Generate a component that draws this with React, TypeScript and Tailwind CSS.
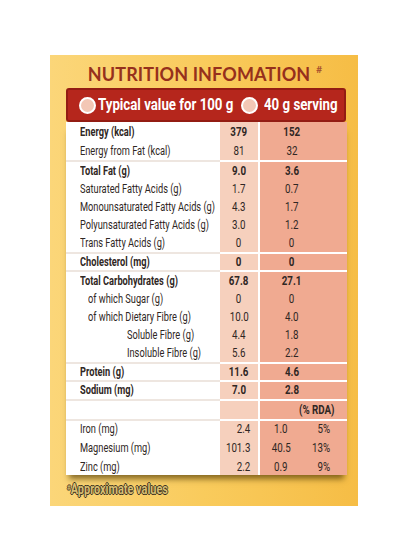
import type { ReactNode } from 'react'

type Row = {
  label: string
  a: string
  b: string
  bold?: boolean
  indent?: 'sub' | 'deep'
  h: number
  line?: boolean
}

const rows: Row[] = [
  { label: 'Energy (kcal)', a: '379', b: '152', bold: true, h: 20 },
  { label: 'Energy from Fat (kcal)', a: '81', b: '32', h: 18 },
  { label: 'Total Fat (g)', a: '9.0', b: '3.6', bold: true, h: 18, line: true },
  { label: 'Saturated Fatty Acids (g)', a: '1.7', b: '0.7', h: 18 },
  { label: 'Monounsaturated Fatty Acids (g)', a: '4.3', b: '1.7', h: 18 },
  { label: 'Polyunsaturated Fatty Acids (g)', a: '3.0', b: '1.2', h: 18 },
  { label: 'Trans Fatty Acids (g)', a: '0', b: '0', h: 18 },
  { label: 'Cholesterol (mg)', a: '0', b: '0', bold: true, h: 16, line: true },
  { label: 'Total Carbohydrates (g)', a: '67.8', b: '27.1', bold: true, h: 18, line: true },
  { label: 'of which Sugar (g)', a: '0', b: '0', indent: 'sub', h: 18 },
  { label: 'of which Dietary Fibre (g)', a: '10.0', b: '4.0', indent: 'sub', h: 18 },
  { label: 'Soluble Fibre (g)', a: '4.4', b: '1.8', indent: 'deep', h: 18 },
  { label: 'Insoluble Fibre (g)', a: '5.6', b: '2.2', indent: 'deep', h: 18 },
  { label: 'Protein (g)', a: '11.6', b: '4.6', bold: true, h: 16, line: true },
  { label: 'Sodium (mg)', a: '7.0', b: '2.8', bold: true, h: 17, line: true },
]

const minerals = [
  { label: 'Iron (mg)', a: '2.4', b: '1.0', rda: '5%', h: 16 },
  { label: 'Magnesium (mg)', a: '101.3', b: '40.5', rda: '13%', h: 22 },
  { label: 'Zinc (mg)', a: '2.2', b: '0.9', rda: '9%', h: 16 },
]

// condensed look: Roboto squeezed horizontally
function T({ children, at = 'left', tight }: { children: ReactNode; at?: 'left' | 'center' | 'right'; tight?: boolean }) {
  const origin = at === 'center' ? 'origin-center' : at === 'right' ? 'origin-right' : 'origin-left'
  return (
    <span className={`inline-block whitespace-nowrap ${tight ? 'scale-x-[0.74]' : 'scale-x-[0.78]'} ${origin}`}>
      {children}
    </span>
  )
}

function Dot() {
  return <span className="h-[17px] w-[17px] shrink-0 rounded-full border-2 border-white bg-[#f3c7b5]" />
}

export default function App() {
  return (
    <div className="h-[552px] w-[409px] bg-white pt-[55px]">
      <div className="ml-[50px] flex h-[451px] w-[308px] flex-col bg-gradient-to-r from-[#fbd679] via-[#f9cb5c] to-[#f6bd45] pl-[16px]">
        <h1 className="mt-[8px] flex h-[22px] items-center justify-center pr-[14px] font-['Lato',sans-serif] text-[18px] font-bold tracking-[0.1px] text-[#96301c]">
          NUTRITION INFOMATION
          <sup className="ml-[6px] text-[10px] text-[#a9542f]">#</sup>
        </h1>

        <div className="mt-[3px] flex h-[34px] w-[280px] items-center rounded-[3px] border-2 border-[#931c13] bg-[#b5261c] pl-[11px] font-['Roboto',sans-serif] text-[17px] font-bold text-white">
          <Dot />
          <span className="ml-[2px] w-[143px]">
            <T>Typical value for 100 g</T>
          </span>
          <Dot />
          <span className="ml-[6px]">
            <T>40 g serving</T>
          </span>
        </div>

        <div className="w-[281px] bg-white font-['Roboto',sans-serif] text-[12.5px] text-[#2f2724] shadow-[0_7px_6px_-3px_rgba(70,50,0,0.65)]">
          {rows.map((r) => (
            <div key={r.label} className={`flex ${r.bold ? 'font-bold' : ''}`} style={{ height: r.h + (r.line ? 2 : 0) }}>
              <div
                className={`flex w-[154px] items-center ${r.line ? 'border-t-2 border-[#eee6e0]' : ''} ${
                  r.indent === 'deep' ? 'pl-[61px]' : r.indent === 'sub' ? 'pl-[22px]' : 'pl-[14px]'
                }`}
              >
                <T tight>{r.label}</T>
              </div>
              <div className={`flex w-[38px] items-center justify-center bg-[#f6d0bd] ${r.line ? 'border-t-2 border-white' : ''}`}>
                <T at="center">{r.a}</T>
              </div>
              <div className={`flex w-[89px] items-center border-l-2 border-white bg-[#f0aa91] ${r.line ? 'border-t-2' : ''}`}>
                <span className="w-[64px] text-center">
                  <T at="center">{r.b}</T>
                </span>
              </div>
            </div>
          ))}

          <div className="flex h-[20px] font-bold">
            <div className="w-[154px] border-t-2 border-[#eee6e0]" />
            <div className="w-[38px] border-t-2 border-white bg-[#f6d0bd]" />
            <div className="flex w-[89px] items-center justify-end border-l-2 border-t-2 border-white bg-[#f0aa91] pr-[12px]">
              <T at="right">(% RDA)</T>
            </div>
          </div>

          {minerals.map((m, i) => (
            <div key={m.label} className="flex" style={{ height: m.h + (i === 0 ? 2 : 0) }}>
              <div className={`flex w-[154px] items-center pl-[14px] ${i === 0 ? 'border-t-2 border-[#eee6e0]' : ''}`}>
                <T tight>{m.label}</T>
              </div>
              <div className={`flex w-[38px] items-center justify-end bg-[#f6d0bd] pr-[8px] ${i === 0 ? 'border-t-2 border-white' : ''}`}>
                <T at="right">{m.a}</T>
              </div>
              <div className={`flex w-[89px] items-center border-l-2 border-white bg-[#f0aa91] ${i === 0 ? 'border-t-2' : ''}`}>
                <span className="w-[42px] text-center">
                  <T at="center">{m.b}</T>
                </span>
                <span className="w-[28px] text-right">
                  <T at="right">{m.rda}</T>
                </span>
              </div>
            </div>
          ))}
        </div>

        <p className="mt-[4px] pl-[1px] font-['Roboto',sans-serif] text-[14px] font-bold text-[#d8bf72] [text-shadow:-1px_0_#3b3120,1px_0_#3b3120,0_-1px_#3b3120,0_1px_#3b3120]">
          <T>
            <sup className="text-[8px]">#</sup>Approximate values
          </T>
        </p>
      </div>
    </div>
  )
}
